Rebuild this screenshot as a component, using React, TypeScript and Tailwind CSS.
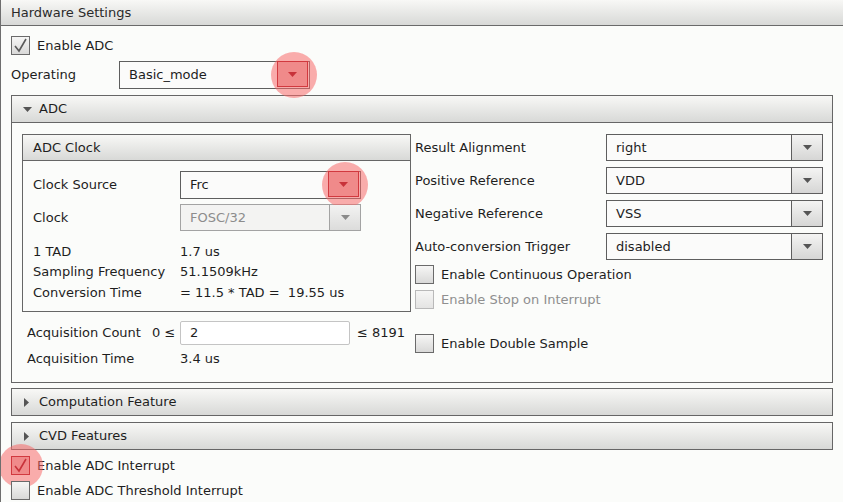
import React from 'react'

const grad = 'bg-linear-to-b from-[#f8f8f6] to-[#d8d9d7]'

function Halo({ size = 46 }: { size?: number }) {
  return (
    <div
      className="absolute rounded-full bg-[#f86a6a]/55 pointer-events-none left-1/2 top-1/2 -translate-x-1/2 -translate-y-1/2"
      style={{ width: size, height: size }}
    />
  )
}

function Combo({
  value,
  width,
  height = 27,
  disabled,
  hot,
}: {
  value: string
  width: number
  height?: number
  disabled?: boolean
  hot?: boolean
}) {
  return (
    <div
      className={`flex border ${disabled ? 'border-[#a3a3a3] bg-[#f3f3f2]' : 'border-[#5e5e5e] bg-[#fbfbfa]'}`}
      style={{ width, height }}
    >
      <div className={`flex-1 flex items-center pl-[9px] ${disabled ? 'text-[#8c8c8c]' : ''}`}>{value}</div>
      <div className="relative w-[31px] shrink-0">
        {hot && <Halo />}
        <div
          className={`relative h-full w-full flex items-center justify-center border-l ${
            hot
              ? 'bg-[#f08a8a] border border-[#d2393f] -m-px h-[calc(100%+2px)] w-[calc(100%+1px)]'
              : disabled
              ? 'border-[#a3a3a3] bg-linear-to-b from-[#f3f3f2] to-[#dcdcdb]'
              : 'border-[#5e5e5e] bg-linear-to-b from-[#f4f4f3] to-[#d6d6d5]'
          }`}
        >
          <svg width="9" height="5" viewBox="0 0 9 5">
            <path d="M0 0h9L4.5 5z" fill={hot ? '#c8323a' : disabled ? '#8a8a8a' : '#555'} />
          </svg>
        </div>
      </div>
    </div>
  )
}

function Check({ label, checked, disabled, hot }: { label: string; checked?: boolean; disabled?: boolean; hot?: boolean }) {
  return (
    <div className="flex items-center h-[19px] gap-[7px]">
      <div className="relative w-[19px] h-[19px]">
        {hot && <Halo size={44} />}
        <div
          className={`relative w-[19px] h-[19px] border ${
            hot
              ? 'border-[#d2393f] bg-[#f08a8a]'
              : disabled
              ? 'border-[#b9b9b9] bg-linear-to-b from-[#f6f6f5] to-[#e4e4e3]'
              : 'border-[#6a6a6a] bg-linear-to-b from-[#f6f6f5] to-[#d9d9d8]'
          }`}
        >
          {checked && (
            <svg width="17" height="17" viewBox="0 0 17 17" className="absolute left-0 top-0">
              <path d="M3 9l4 5 7-12" fill="none" stroke={hot ? '#c8323a' : '#5a5a5a'} strokeWidth="1.6" />
            </svg>
          )}
        </div>
      </div>
      <span className={disabled ? 'text-[#8f8f8f]' : ''}>{label}</span>
    </div>
  )
}

function SectionBar({ title, open }: { title: string; open?: boolean }) {
  return (
    <div className={`h-[26px] flex items-center pl-[11px] gap-[7px] ${grad}`}>
      <svg width="9" height="9" viewBox="0 0 9 9">
        {open ? <path d="M0 2h9L4.5 7z" fill="#555" /> : <path d="M1 0v9L6 4.5z" fill="#555" />}
      </svg>
      <span>{title}</span>
    </div>
  )
}

export default function App() {
  const rightRows = [
    { label: 'Result Alignment', value: 'right' },
    { label: 'Positive Reference', value: 'VDD' },
    { label: 'Negative Reference', value: 'VSS' },
    { label: 'Auto-conversion Trigger', value: 'disabled' },
  ]

  return (
    <div className="relative w-[843px] h-[502px] overflow-hidden bg-[#fbfcfa] border-l border-[#6e6e6e] font-['DejaVu_Sans',sans-serif] text-[13px] text-[#1e1e1e]">
      {/* Header */}
      <div className={`h-[26px] flex items-center pl-[10px] border-b border-[#6a6a6a] text-[#2a2a2a] ${grad}`}>
        Hardware Settings
      </div>

      <div className="px-[10px]">
        <div className="mt-[10px]">
          <Check label="Enable ADC" checked />
        </div>

        <div className="mt-[6px] flex items-center">
          <span className="w-[108px]">Operating</span>
          <Combo value="Basic_mode" width={191} height={28} hot />
        </div>

        {/* ADC */}
        <div className="mt-[6px] h-[288px] border border-[#666]">
          <div className="border-b border-[#666]">
            <SectionBar title="ADC" open />
          </div>
          <div className="flex pl-[10px] pt-[11px]">
            <div className="w-[389px]">
              <div className="h-[178px] border border-[#666]">
                <div className={`h-[26px] flex items-center pl-[10px] border-b border-[#666] ${grad}`}>ADC Clock</div>
                <div className="pl-[10px] pt-[10px]">
                  <div className="flex items-center">
                    <span className="w-[147px]">Clock Source</span>
                    <Combo value="Frc" width={181} height={28} hot />
                  </div>
                  <div className="mt-[5px] flex items-center">
                    <span className="w-[147px]">Clock</span>
                    <Combo value="FOSC/32" width={181} disabled />
                  </div>
                  <div className="mt-[10px]">
                    {[
                      ['1 TAD', '1.7 us'],
                      ['Sampling Frequency', '51.1509kHz'],
                      ['Conversion Time', '= 11.5 * TAD =  19.55 us'],
                    ].map(([k, v]) => (
                      <div key={k} className="h-[20.5px] flex items-center">
                        <span className="w-[147px]">{k}</span>
                        <span className="whitespace-pre">{v}</span>
                      </div>
                    ))}
                  </div>
                </div>
              </div>

              <div className="mt-[9px] pl-[5px] flex items-center h-[24px]">
                <span className="w-[125px]">Acquisition Count</span>
                <span className="w-[28px]">0 ≤</span>
                <div className="w-[170px] h-[24px] border border-[#c4c4c4] rounded-[2px] bg-white flex items-center pl-[9px]">2</div>
                <span className="ml-[7px]">≤ 8191</span>
              </div>
              <div className="mt-[4px] pl-[5px] h-[20px] flex items-center">
                <span className="w-[153px]">Acquisition Time</span>
                <span>3.4 us</span>
              </div>
            </div>

            <div className="ml-[4px]">
              <div className="flex flex-col gap-[6px]">
                {rightRows.map((r) => (
                  <div key={r.label} className="flex items-center">
                    <span className="w-[191px]">{r.label}</span>
                    <Combo value={r.value} width={217} />
                  </div>
                ))}
              </div>
              <div className="mt-[5px]">
                <Check label="Enable Continuous Operation" />
              </div>
              <div className="mt-[6px]">
                <Check label="Enable Stop on Interrupt" disabled />
              </div>
              <div className="mt-[25px]">
                <Check label="Enable Double Sample" />
              </div>
            </div>
          </div>
        </div>

        <div className="mt-[5px] border border-[#666]">
          <SectionBar title="Computation Feature" />
        </div>
        <div className="mt-[6px] border border-[#666]">
          <SectionBar title="CVD Features" />
        </div>

        <div className="mt-[6px]">
          <Check label="Enable ADC Interrupt" checked hot />
        </div>
        <div className="mt-[6px]">
          <Check label="Enable ADC Threshold Interrupt" />
        </div>
      </div>
    </div>
  )
}
